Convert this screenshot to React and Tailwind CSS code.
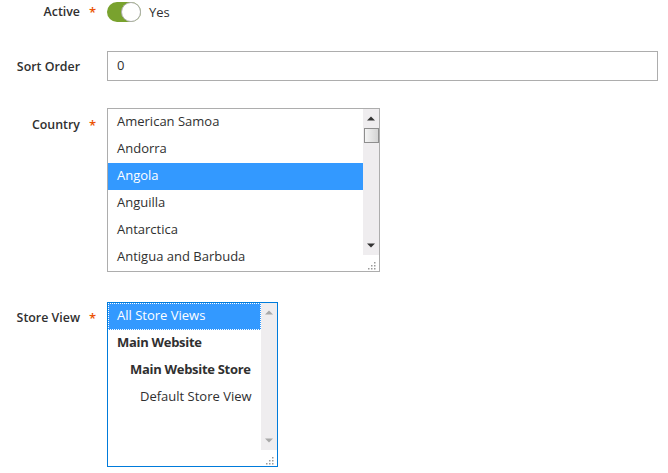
import React from "react";

const font = { fontFamily: '"Open Sans", "Liberation Sans", sans-serif' };

function Label({ text, required }) {
  return (
    <div className="flex w-[107px] shrink-0 justify-end text-[12.4px] font-semibold text-[#303030]">
      <span>{text}</span>
      <span className="w-[27px] pl-[9px] text-[13px] text-[#eb5202]">{required ? "*" : ""}</span>
    </div>
  );
}

function Grip() {
  return (
    <svg width="16" height="16" viewBox="0 0 16 16" className="block">
      {[
        [11, 7],
        [8, 10],
        [11, 10],
        [5, 13],
        [8, 13],
        [11, 13],
      ].map(([x, y], i) => (
        <rect key={i} x={x} y={y} width="1.5" height="1.5" fill="#9a9a9a" />
      ))}
    </svg>
  );
}

function Scrollbar({ thumb, arrow }) {
  return (
    <div className="flex w-[16px] shrink-0 flex-col">
      <div className="relative flex flex-1 flex-col items-center bg-[#efedef]">
        <svg width="8" height="5" viewBox="0 0 8 5" className="mt-[7px]">
          <path d="M0 4.5 L4 0.5 L8 4.5 Z" fill={arrow} />
        </svg>
        {thumb ? (
          <div className="mt-[7px] h-[15px] w-[15px] border border-[#8e8e8e] bg-gradient-to-r from-[#f4f4f4] to-[#d4d4d4]" />
        ) : null}
        <div className="flex-1" />
        <svg width="8" height="5" viewBox="0 0 8 5" className="mb-[7px]">
          <path d="M0 0.5 L8 0.5 L4 4.5 Z" fill={arrow} />
        </svg>
      </div>
      <div className="h-[16px] bg-white">
        <Grip />
      </div>
    </div>
  );
}

export default function App() {
  const countries = [
    "American Samoa",
    "Andorra",
    "Angola",
    "Anguilla",
    "Antarctica",
    "Antigua and Barbuda",
  ];
  return (
    <div className="h-[473px] w-[668px] bg-white text-[13px] text-[#303030]" style={font}>
      {/* Active */}
      <div className="flex pt-[2px]">
        <div className="pt-[1px]">
          <Label text="Active" required />
        </div>
        <div className="flex items-center">
          <div className="relative h-[20px] w-[34px] rounded-full bg-[#79a22e]">
            <div className="absolute right-0 top-0 h-[20px] w-[20px] rounded-full border border-[#adadad] bg-white" />
          </div>
          <span className="ml-[8px] text-[13px] text-[#303030]">Yes</span>
        </div>
      </div>

      {/* Sort Order */}
      <div className="mt-[28px] flex">
        <div className="pt-[7px]">
          <Label text="Sort Order" />
        </div>
        <div className="flex h-[30px] w-[551px] items-center border border-[#adadad] px-[9px] text-[13px]">
          0
        </div>
      </div>

      {/* Country */}
      <div className="mt-[27px] flex">
        <div className="pt-[8px]">
          <Label text="Country" required />
        </div>
        <div className="flex h-[164px] w-[273px] border border-[#adadad]">
          <div className="flex flex-1 flex-col">
            {countries.map((c, i) => (
              <div
                key={c}
                className={
                  "flex h-[27px] items-center px-[9px] " +
                  (i === 2 ? "bg-[#3399ff] text-white" : "text-[#303030]")
                }
              >
                {c}
              </div>
            ))}
          </div>
          <Scrollbar thumb arrow="#333" />
        </div>
      </div>

      {/* Store View */}
      <div className="mt-[30px] flex">
        <div className="pt-[7px]">
          <Label text="Store View" required />
        </div>
        <div className="flex h-[165px] w-[171px] border border-[#007bdb]">
          <div className="flex flex-1 flex-col">
            <div className="flex h-[27px] items-center border border-dotted border-white bg-[#3399ff] px-[8px] text-white">
              All Store Views
            </div>
            <div className="flex h-[27px] items-center px-[9px] font-bold tracking-[-0.3px]">Main Website</div>
            <div className="flex h-[27px] items-center pl-[22px] font-bold tracking-[-0.3px]">Main Website Store</div>
            <div className="flex h-[27px] items-center pl-[32px]">Default Store View</div>
          </div>
          <Scrollbar arrow="#a8a8a8" />
        </div>
      </div>
    </div>
  );
}
